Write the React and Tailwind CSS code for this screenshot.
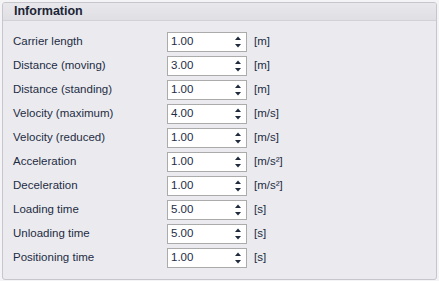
import React from 'react';

const rows = [
  ['Carrier length', '1.00', '[m]'],
  ['Distance (moving)', '3.00', '[m]'],
  ['Distance (standing)', '1.00', '[m]'],
  ['Velocity (maximum)', '4.00', '[m/s]'],
  ['Velocity (reduced)', '1.00', '[m/s]'],
  ['Acceleration', '1.00', '[m/s²]'],
  ['Deceleration', '1.00', '[m/s²]'],
  ['Loading time', '5.00', '[s]'],
  ['Unloading time', '5.00', '[s]'],
  ['Positioning time', '1.00', '[s]'],
];

function Spin() {
  return (
    <svg width="8" height="18" viewBox="0 0 8 18" className="shrink-0">
      <path d="M4 3.5 L7 7 L1 7 Z" fill="#1f2a3c" />
      <path d="M4 14.5 L7 11 L1 11 Z" fill="#1f2a3c" />
    </svg>
  );
}

function Row({ label, value, unit }) {
  return (
    <div className="flex h-[24px] items-center">
      <div className="w-[164px] pl-[10px]">{label}</div>
      <div className="flex h-[20px] w-[80px] items-center border border-[#ababab] bg-white pl-[3px] pr-[4px]">
        <span className="flex-1">{value}</span>
        <Spin />
      </div>
      <div className="pl-[7px]">{unit}</div>
    </div>
  );
}

export default function App() {
  return (
    <div
      className="h-[281px] w-[439px] bg-[#f4f4f6] p-[2px] pb-[1px] text-[11.5px] text-[#1e2b44]"
      style={{ fontFamily: '"Liberation Sans", Arial, sans-serif' }}
    >
      <div className="flex h-full flex-col overflow-hidden rounded-[3px] border border-[#c6c6cc] bg-[#ebebef]">
        <div className="flex h-[18px] items-center border-b border-[#d2d2d6] bg-gradient-to-b from-[#e8e8ec] to-[#e0e0e4] pl-[11px] text-[12.5px] font-bold text-[#1c2536]">
          Information
        </div>
        <div className="flex flex-col pt-[9px]">
          {rows.map(([l, v, u]) => (
            <Row key={l} label={l} value={v} unit={u} />
          ))}
        </div>
      </div>
    </div>
  );
}
